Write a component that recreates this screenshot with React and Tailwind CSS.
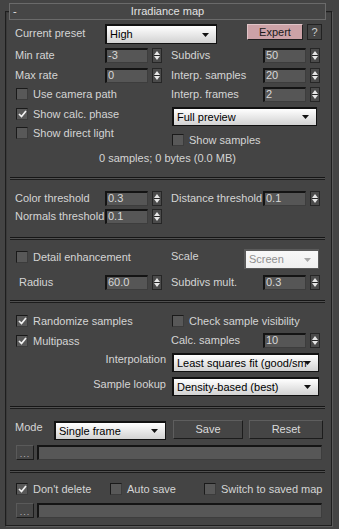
import React from "react";

function Arrows() {
  return (
    <div className="w-[10px] h-[15px] border border-[#262626] bg-[#4b4b4b] flex flex-col items-center justify-between py-[2px] shrink-0">
      <svg width="6" height="4" viewBox="0 0 6 4"><path d="M3 0 L6 4 L0 4Z" fill="#e6e6e6" /></svg>
      <div className="w-[6px] h-px bg-[#262626]" />
      <svg width="6" height="4" viewBox="0 0 6 4"><path d="M0 0 L6 0 L3 4Z" fill="#e6e6e6" /></svg>
    </div>
  );
}

function Spin({ v }) {
  return (
    <div className="flex items-center gap-[4px]">
      <div className="w-[43px] h-[15px] bg-[#565656] border-t-2 border-l-2 border-r border-b border-t-[#141414] border-l-[#141414] border-r-[#3d3d3d] border-b-[#3d3d3d] text-[#d8d8d8] leading-[11px] pl-[1px] text-[11px]">
        {v}
      </div>
      <Arrows />
    </div>
  );
}

function CB({ checked }) {
  return (
    <div className="w-[12px] h-[12px] bg-[#585858] border border-t-[#1a1a1a] border-l-[#1a1a1a] border-r-[#3c3c3c] border-b-[#3c3c3c] flex items-center justify-center shrink-0">
      {checked && (
        <svg width="9" height="8" viewBox="0 0 9 8">
          <path d="M1 4 L3.5 6.5 L8 1" stroke="#f2f2f2" strokeWidth="1.7" fill="none" />
        </svg>
      )}
    </div>
  );
}

function Check({ checked, label, className = "" }) {
  return (
    <div className={"flex items-center gap-[5px] h-[12px] " + className}>
      <CB checked={checked} />
      <span className="leading-[12px] whitespace-nowrap">{label}</span>
    </div>
  );
}

function DD({ text, className = "", disabled }) {
  return (
    <div
      className={
        "relative flex items-center bg-gradient-to-b border border-t-2 border-l-2 pl-[3px] whitespace-nowrap overflow-hidden " +
        (disabled
          ? "text-[#8f8f8f] border-[#5a5a5a] from-[#f8f8f8] to-[#f0f0f0] "
          : "text-[#000000] border-[#111111] from-[#ffffff] to-[#d2d2d2] ") +
        className
      }
    >
      <span className="text-[11px] leading-[13px]">{text}</span>
      <div className="absolute right-[7px] top-1/2 -translate-y-1/2 flex items-center">
        <svg width="7" height="4" viewBox="0 0 7 4"><path d="M0 0 L7 0 L3.5 4Z" fill={disabled ? "#a8a8a8" : "#111"} /></svg>
      </div>
    </div>
  );
}

function Sep({ className = "" }) {
  return (
    <div className={"w-[315px] h-[3px] border-t border-b border-t-[#161616] border-b-[#1c1c1c] bg-[#505050] " + className} />
  );
}

function Btn({ children, className = "" }) {
  return (
    <div className={"flex items-center justify-center bg-[#454545] border border-t-[#5e5e5e] border-l-[#5e5e5e] border-r-[#1c1c1c] border-b-[#1c1c1c] text-[#dcdcdc] " + className}>
      {children}
    </div>
  );
}

function PathRow({ className = "" }) {
  return (
    <div className={"flex items-center gap-[3px] pl-[6px] h-[15px] " + className}>
      <div className="w-[18px] h-[15px] bg-[#474747] border border-t-[#5a5a5a] border-l-[#5a5a5a] border-r-[#1c1c1c] border-b-[#1c1c1c] flex items-end justify-center text-[#bdbdbd] text-[9px] leading-[10px] tracking-[1px]">
        ...
      </div>
      <div className="w-[285px] h-[15px] bg-[#575757] border-t-2 border-l-2 border-r border-b border-t-[#141414] border-l-[#141414] border-r-[#3d3d3d] border-b-[#3d3d3d]" />
    </div>
  );
}

export default function App() {
  return (
    <div className="w-[339px] h-[529px] bg-[#444444] overflow-hidden font-['Liberation_Sans',Arial,sans-serif] text-[11px] text-[#d4d4d4] pt-[11px] pl-[5px]">
      <div className="w-[327px] h-[515px] border border-[#1e1e1e] shadow-[inset_1px_1px_0_#3a3a3a,1px_1px_0_#5a5a5a] flex flex-col pl-[4px]">
        {/* title */}
        <div className="-mt-[9px] -ml-[1px] w-[317px] h-[17px] bg-[#464646] border border-[#6a6a6a] relative flex items-center justify-center text-[#e2e2e2]">
          <span className="absolute left-[3px] top-[1px] leading-[13px]">-</span>
          <span className="leading-[13px]">Irradiance map</span>
        </div>

        {/* row 1 */}
        <div className="mt-[4px] h-[20px] flex items-start pl-[5px]">
          <div className="w-[90px] leading-[13px] mt-[3px]">Current preset</div>
          <DD text="High" className="w-[112px] h-[20px]" />
          <div className="ml-[30px] w-[56px] h-[16px] bg-[#cca2a7] border border-t-[#e0c4c7] border-l-[#e0c4c7] border-r-[#202020] border-b-[#202020] flex items-center justify-center text-[#1a1a1a] leading-[13px]">
            Expert
          </div>
          <div className="ml-[4px] w-[15px] h-[16px] border border-[#222222] bg-[#444444] flex items-center justify-center text-[#cfcfcf] leading-[13px]">
            ?
          </div>
        </div>

        {/* row 2 */}
        <div className="mt-[4px] h-[15px] flex items-center">
          <div className="w-[161px] pl-[5px] flex items-center">
            <div className="w-[90px]">Min rate</div>
            <Spin v="-3" />
          </div>
          <div className="flex items-center">
            <div className="w-[92px]">Subdivs</div>
            <Spin v="50" />
          </div>
        </div>

        {/* row 3 */}
        <div className="mt-[5px] h-[15px] flex items-center">
          <div className="w-[161px] pl-[5px] flex items-center">
            <div className="w-[90px]">Max rate</div>
            <Spin v="0" />
          </div>
          <div className="flex items-center">
            <div className="w-[92px]">Interp. samples</div>
            <Spin v="20" />
          </div>
        </div>

        {/* block */}
        <div className="mt-[4px] flex items-start">
          <div className="w-[161px] pl-[6px] flex flex-col">
            <Check label="Use camera path" className="mt-[1px]" />
            <Check checked label="Show calc. phase" className="mt-[8px]" />
            <Check label="Show direct light" className="mt-[7px]" />
          </div>
          <div className="flex flex-col">
            <div className="flex items-center h-[15px]">
              <div className="w-[92px]">Interp. frames</div>
              <Spin v="2" />
            </div>
            <DD text="Full preview" className="mt-[5px] ml-[1px] w-[145px] h-[19px]" />
            <Check label="Show samples" className="mt-[8px] ml-[1px]" />
          </div>
        </div>

        <div className="mt-[6px] w-[315px] text-center leading-[13px]">0 samples; 0 bytes (0.0 MB)</div>

        <Sep className="mt-[12px]" />

        {/* section 2 */}
        <div className="mt-[11px] h-[15px] flex items-center">
          <div className="w-[161px] pl-[5px] flex items-center">
            <div className="w-[90px]">Color threshold</div>
            <Spin v="0.3" />
          </div>
          <div className="flex items-center">
            <div className="w-[92px] whitespace-nowrap">Distance threshold</div>
            <Spin v="0.1" />
          </div>
        </div>
        <div className="mt-[3px] h-[15px] flex items-center">
          <div className="w-[161px] pl-[5px] flex items-center">
            <div className="w-[90px] whitespace-nowrap">Normals threshold</div>
            <Spin v="0.1" />
          </div>
        </div>

        <Sep className="mt-[13px]" />

        {/* section 3 */}
        <div className="mt-[9px] h-[20px] flex items-start">
          <div className="w-[161px] pl-[6px]">
            <Check label="Detail enhancement" className="mt-[2px]" />
          </div>
          <div className="flex items-start">
            <div className="w-[73px] mt-[1px] leading-[13px]">Scale</div>
            <DD disabled text="Screen" className="w-[75px] h-[20px]" />
          </div>
        </div>
        <div className="mt-[6px] h-[15px] flex items-center">
          <div className="w-[161px] pl-[5px] flex items-center">
            <div className="w-[90px] pl-[4px]">Radius</div>
            <Spin v="60.0" />
          </div>
          <div className="flex items-center">
            <div className="w-[92px]">Subdivs mult.</div>
            <Spin v="0.3" />
          </div>
        </div>

        <Sep className="mt-[10px]" />

        {/* section 4 */}
        <div className="mt-[12px] flex items-center">
          <div className="w-[161px] pl-[6px]">
            <Check checked label="Randomize samples" />
          </div>
          <Check label="Check sample visibility" className="ml-[1px]" />
        </div>
        <div className="mt-[6px] h-[15px] flex items-center">
          <div className="w-[161px] pl-[6px]">
            <Check checked label="Multipass" />
          </div>
          <div className="flex items-center">
            <div className="w-[92px]">Calc. samples</div>
            <Spin v="10" />
          </div>
        </div>
        <div className="mt-[5px] flex items-start">
          <div className="w-[161px] pr-[5px] text-right leading-[13px]">Interpolation</div>
          <DD text="Least squares fit (good/sm" className="ml-[1px] w-[147px] h-[19px]" />
        </div>
        <div className="mt-[5px] flex items-start">
          <div className="w-[161px] pr-[5px] text-right leading-[13px] mt-[1px]">Sample lookup</div>
          <DD text="Density-based (best)" className="ml-[1px] w-[147px] h-[19px]" />
        </div>

        <Sep className="mt-[10px]" />

        {/* section 5 */}
        <div className="mt-[11px] flex items-start pl-[5px]">
          <div className="w-[39px] leading-[13px] mt-[1px]">Mode</div>
          <DD text="Single frame" className="mt-[1px] w-[112px] h-[19px]" />
          <Btn className="ml-[7px] w-[70px] h-[19px]">Save</Btn>
          <Btn className="ml-[6px] w-[74px] h-[19px]">Reset</Btn>
        </div>
        <PathRow className="mt-[5px]" />

        <Sep className="mt-[10px]" />

        {/* section 6 */}
        <div className="mt-[10px] flex items-center pl-[6px]">
          <div className="w-[94px]">
            <Check checked label="Don't delete" />
          </div>
          <div className="w-[94px]">
            <Check label="Auto save" />
          </div>
          <Check label="Switch to saved map" />
        </div>
        <PathRow className="mt-[8px]" />
      </div>
    </div>
  );
}
